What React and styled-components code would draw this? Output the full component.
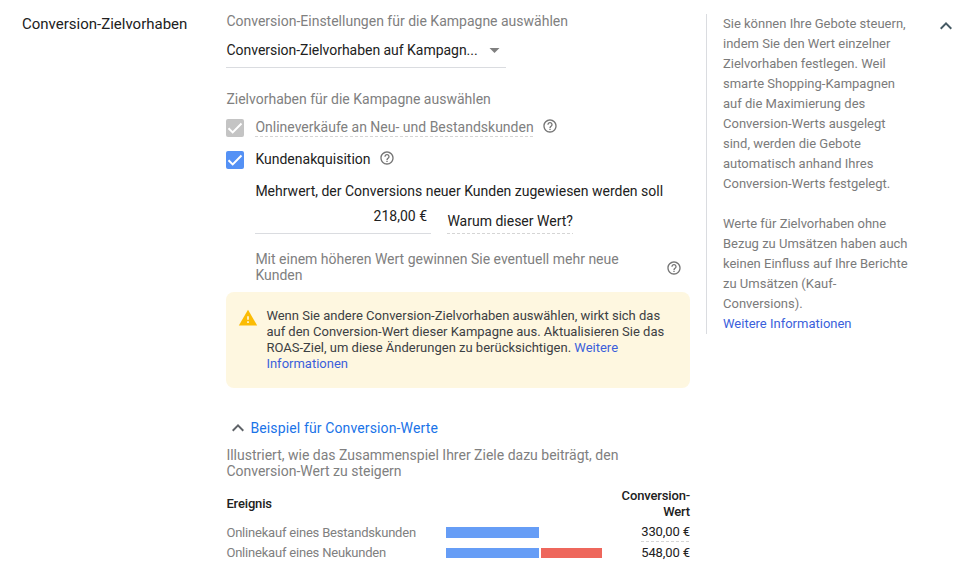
import React from 'react';
import styled, { createGlobalStyle } from 'styled-components';

const GlobalStyle = createGlobalStyle`
  * { box-sizing: border-box; }
  body {
    margin: 0;
    background: #fff;
    color: #212121;
    font: 400 14px/16px Roboto, "Liberation Sans", sans-serif;
  }
`;

const Page = styled.main`
  display: grid;
  grid-template-columns: 204px 464px 214px 1fr;
  width: 979px;
  height: 580px;
  padding-left: 22px;
  overflow: hidden;
`;

const Title = styled.h2`
  margin: 14px 0 0;
  font-size: 15px;
  line-height: 20px;
  font-weight: 400;
  white-space: nowrap;
`;

const Content = styled.section`
  display: flex;
  flex-direction: column;
  padding-top: 13px;
`;

const Hint = styled.p`
  margin: 0;
  color: #808080;
  text-indent: 0;
  padding-left: 0.4px;
  white-space: nowrap;
`;

const Select = styled.div`
  display: flex;
  align-items: center;
  width: 280px;
  height: 35px;
  margin: 4px 0 23px;
  padding-bottom: 1px;
  border-bottom: 1px solid #dadce0;
  white-space: nowrap;
`;

const SelectValue = styled.span`
  width: 256px;
  padding-left: 0.5px;
  letter-spacing: -0.03px;
`;

const CaretSvg = styled.svg`
  width: 24px;
  height: 24px;
  fill: #808080;
`;

const Goals = styled.div`
  padding-top: 12px;
`;

const Goal = styled.label`
  display: flex;
  align-items: flex-start;
  height: 32px;
  color: ${(p) => (p.$disabled ? '#808080' : '#212121')};
  white-space: nowrap;
`;

const Check = styled.svg`
  width: 18px;
  height: 18px;
  margin-right: 11.4px;
  border-radius: 2px;
  background: ${(p) => (p.$disabled ? '#c4c4c4' : '#5491f5')};
`;

const dashes = `repeating-linear-gradient(to right, #d5d5d5 0 3px, transparent 3px 5px) left bottom / 100% 1px no-repeat`;

const Dashed = styled.span`
  height: 18px;
  background: ${dashes};
`;

const HelpSvg = styled.svg`
  flex: none;
  width: 16px;
  height: 16px;
  margin: ${(p) => p.$margin || '0'};
  fill: #757575;
`;

const Nested = styled.div`
  margin-left: 29px;
`;

const Question = styled.div`
  padding-left: 0.4px;
  white-space: nowrap;
`;

const ValueRow = styled.div`
  display: flex;
  gap: 16px;
  height: 35px;
  white-space: nowrap;
`;

const Amount = styled.div`
  width: 176px;
  padding: 9px 4px 0 0;
  border-bottom: 1px solid #dadce0;
  text-align: right;
`;

const Why = styled.span`
  height: 35px;
  padding: 14px 0 0 0.4px;
  background: ${dashes};
`;

const HelperRow = styled.div`
  display: flex;
  justify-content: space-between;
  align-items: center;
  margin: 17px 8px 9px 0;
`;

const Notice = styled.div`
  display: flex;
  height: 96px;
  padding: 16px 12px;
  border-radius: 8px;
  background: #fef7e0;
  color: #3c4043;
  font-size: 13px;
  white-space: nowrap;
`;

const WarningSvg = styled.svg`
  flex: none;
  width: 20px;
  height: 20px;
  margin-right: 8.4px;
  fill: #fbbc04;
`;

const Link = styled.a`
  color: #3b5fdb;
`;

const Toggle = styled.div`
  display: flex;
  align-items: center;
  height: 24px;
  margin: 28px 0 7px;
  color: #1a73e8;
  letter-spacing: 0.13px;
  white-space: nowrap;
`;

const ChevronSvg = styled.svg`
  width: 24px;
  height: 24px;
  margin-right: 0.4px;
  fill: ${(p) => p.$color};
`;

const Table = styled.div`
  margin-top: 9px;
  font-size: 13px;
`;

const Row = styled.div`
  display: grid;
  grid-template-columns: 220px 1fr auto;
  align-items: center;
  height: ${(p) => p.$height}px;
  white-space: nowrap;
`;

const HeadRow = styled(Row)`
  margin-bottom: 2px;
  font-weight: 500;
  letter-spacing: -0.15px;
  text-align: right;

  span:first-child {
    padding-left: 0.4px;
    text-align: left;
  }
`;

const EventName = styled.span`
  padding-left: 0.4px;
  color: #808080;
  letter-spacing: -0.2px;
`;

const Bars = styled.div`
  display: flex;
  gap: 2px;
`;

const Bar = styled.div`
  width: ${(p) => p.$width}px;
  height: ${(p) => p.$height}px;
  background: ${(p) => p.$color};
`;

const Price = styled.span`
  height: 19px;
  line-height: 18px;
  letter-spacing: -0.1px;
  background: ${(p) => (p.$dashed ? dashes : 'none')};
`;

const Aside = styled.aside`
  height: 320px;
  margin: 14px 0 0 16px;
  padding-left: 16px;
  border-left: 1px solid #dadce0;
  color: #7b7b7b;
  font-size: 13px;
  line-height: 20px;
  white-space: nowrap;
`;

const Collapse = styled.div`
  padding: 14px 0 0 30px;
`;

const Chevron = ({ color = '#5f6368' }) => (
  <ChevronSvg viewBox="0 0 24 24" $color={color}>
    <path d="M12 8l-6 6 1.41 1.41L12 10.83l4.59 4.58L18 14z" />
  </ChevronSvg>
);

const Checkbox = ({ disabled }) => (
  <Check viewBox="0 0 18 18" $disabled={disabled}>
    <path d="M2.5 9.2l4.2 4.2 8.8-8.9" fill="none" stroke="#fff" strokeWidth="2" />
  </Check>
);

const Help = ({ margin }) => (
  <HelpSvg viewBox="0 0 24 24" $margin={margin}>
    <path d="M11 18h2v-2h-2v2zm1-16C6.48 2 2 6.48 2 12s4.48 10 10 10 10-4.48 10-10S17.52 2 12 2zm0 18c-4.41 0-8-3.59-8-8s3.59-8 8-8 8 3.59 8 8-3.59 8-8 8zm0-14c-2.21 0-4 1.79-4 4h2c0-1.1.9-2 2-2s2 .9 2 2c0 2-3 1.75-3 5h2c0-2.25 3-2.5 3-5 0-2.21-1.79-4-4-4z" />
  </HelpSvg>
);

const events = [
  {
    name: 'Onlinekauf eines Bestandskunden',
    bars: [[93, '#669df6']],
    rowHeight: 21,
    barHeight: 11,
    price: '330,00 €',
    dashed: true,
  },
  {
    name: 'Onlinekauf eines Neukunden',
    bars: [[93, '#669df6'], [61, '#ee675c']],
    rowHeight: 20,
    barHeight: 10,
    price: '548,00 €',
  },
];

export default function App() {
  return (
    <>
      <GlobalStyle />
      <Page>
        <Title>Conversion-Zielvorhaben</Title>
        <Content>
          <Hint>Conversion-Einstellungen für die Kampagne auswählen</Hint>
          <Select>
            <SelectValue>Conversion-Zielvorhaben auf Kampagn...</SelectValue>
            <CaretSvg viewBox="0 0 24 24">
              <path d="M7.5 10h10L12.5 15z" />
            </CaretSvg>
          </Select>
          <Hint>Zielvorhaben für die Kampagne auswählen</Hint>
          <Goals>
            <Goal $disabled>
              <Checkbox disabled />
              <Dashed>Onlineverkäufe an Neu- und Bestandskunden</Dashed>
              <Help margin="-1px 0 0 8px" />
            </Goal>
            <Goal>
              <Checkbox />
              <span>Kundenakquisition</span>
              <Help margin="-1px 0 0 8px" />
            </Goal>
          </Goals>
          <Nested>
            <Question>Mehrwert, der Conversions neuer Kunden zugewiesen werden soll</Question>
            <ValueRow>
              <Amount>218,00 €</Amount>
              <Why>Warum dieser Wert?</Why>
            </ValueRow>
            <HelperRow>
              <Hint>
                Mit einem höheren Wert gewinnen Sie eventuell mehr neue
                <br />
                Kunden
              </Hint>
              <Help margin="2px 0 0" />
            </HelperRow>
          </Nested>
          <Notice>
            <WarningSvg viewBox="0 0 24 24">
              <path d="M1 21h22L12 2 1 21z" />
              <path d="M11 16h2v2h-2zM11 10h2v4h-2z" fill="#fef7e0" />
            </WarningSvg>
            <div>
              Wenn Sie andere Conversion-Zielvorhaben auswählen, wirkt sich das
              <br />
              auf den Conversion-Wert dieser Kampagne aus. Aktualisieren Sie das
              <br />
              ROAS-Ziel, um diese Änderungen zu berücksichtigen.{' '}
              <Link>
                Weitere
                <br />
                Informationen
              </Link>
            </div>
          </Notice>
          <Toggle>
            <Chevron />
            Beispiel für Conversion-Werte
          </Toggle>
          <Hint>
            Illustriert, wie das Zusammenspiel Ihrer Ziele dazu beiträgt, den
            <br />
            Conversion-Wert zu steigern
          </Hint>
          <Table>
            <HeadRow $height={32}>
              <span>Ereignis</span>
              <span />
              <span>
                Conversion-
                <br />
                Wert
              </span>
            </HeadRow>
            {events.map((e) => (
              <Row key={e.name} $height={e.rowHeight}>
                <EventName>{e.name}</EventName>
                <Bars>
                  {e.bars.map(([width, color]) => (
                    <Bar key={color} $width={width} $height={e.barHeight} $color={color} />
                  ))}
                </Bars>
                <Price $dashed={e.dashed}>{e.price}</Price>
              </Row>
            ))}
          </Table>
        </Content>
        <Aside>
          Sie können Ihre Gebote steuern,
          <br />
          indem Sie den Wert einzelner
          <br />
          Zielvorhaben festlegen. Weil
          <br />
          smarte Shopping-Kampagnen
          <br />
          auf die Maximierung des
          <br />
          Conversion-Werts ausgelegt
          <br />
          sind, werden die Gebote
          <br />
          automatisch anhand Ihres
          <br />
          Conversion-Werts festgelegt.
          <br />
          <br />
          Werte für Zielvorhaben ohne
          <br />
          Bezug zu Umsätzen haben auch
          <br />
          keinen Einfluss auf Ihre Berichte
          <br />
          zu Umsätzen (Kauf-
          <br />
          Conversions).
          <br />
          <Link>Weitere Informationen</Link>
        </Aside>
        <Collapse>
          <Chevron color="#455a64" />
        </Collapse>
      </Page>
    </>
  );
}
